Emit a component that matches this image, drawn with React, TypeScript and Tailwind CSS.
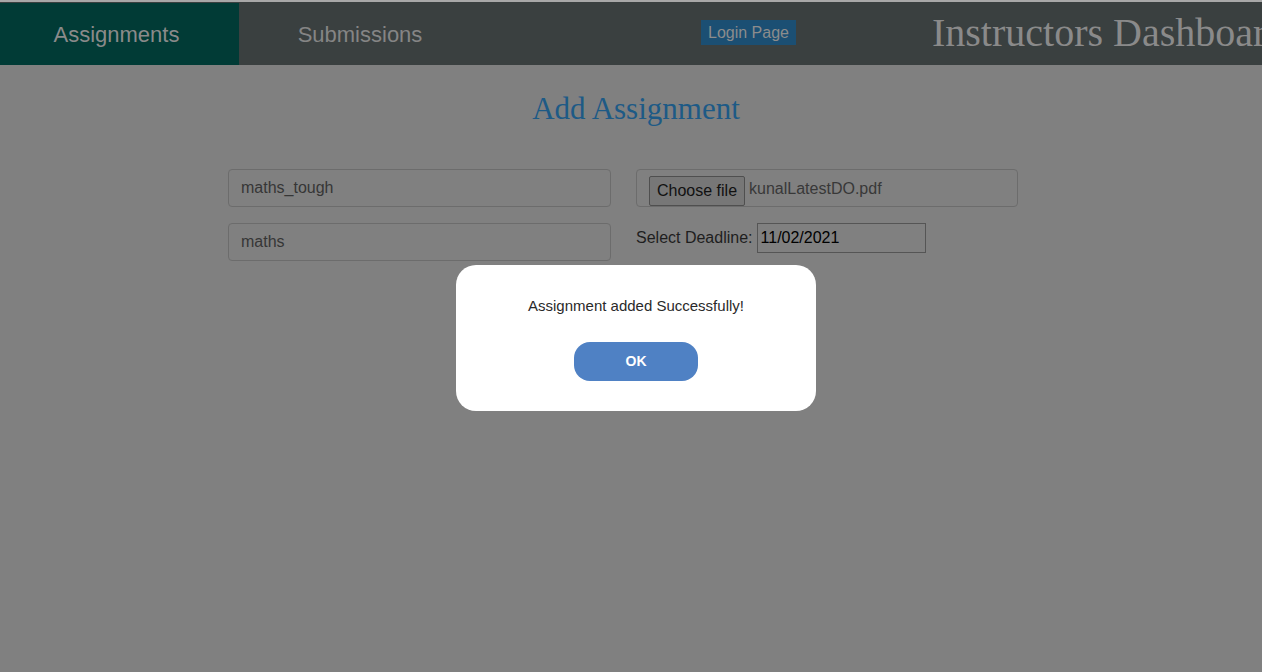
export default function App() {
  return (
    <div className="relative min-h-screen w-full overflow-hidden bg-[#808080] font-['Liberation_Sans',Arial,sans-serif]">
      {/* top strip */}
      <div className="h-[2px] bg-[#a8a8a8]" />
      <div className="h-[1px] bg-[#3a4040]" />

      {/* Nav */}
      <nav className="flex h-[62px] items-center overflow-hidden whitespace-nowrap bg-[#3a4040]">
        <div className="flex h-full w-[239px] shrink-0 items-center justify-center bg-[#013b36] pr-[6px] text-[22px] text-[#8a8a8a]">
          Assignments
        </div>
        <div className="flex h-full w-[242px] shrink-0 items-center justify-center text-[22px] text-[#858585]">
          Submissions
        </div>
        <button className="mb-[4px] ml-[220px] h-[25px] shrink-0 bg-[#1b4f73] px-[7px] text-[16px] leading-[25px] text-[#8c8c8c]">
          Login Page
        </button>
        <div className="mb-[2px] ml-[136px] shrink-0 font-['Liberation_Serif','Times_New_Roman',serif] text-[40px] text-[#8a8a8a]">
          Instructors Dashboard
        </div>
      </nav>

      {/* Form */}
      <h1 className="mt-[25px] pl-[10px] text-center font-['Liberation_Serif','Times_New_Roman',serif] text-[31px] leading-[38px] text-[#1d5a86]">
        Add Assignment
      </h1>

      <div className="ml-[228px] mt-[41px] flex gap-[25px]">
        <div className="flex w-[383px] flex-col gap-[16px]">
          <div className="flex h-[38px] items-center rounded-[4px] border border-[#6c6c6c] px-[12px] text-[16px] text-[#363636]">
            maths_tough
          </div>
          <div className="flex h-[38px] items-center rounded-[4px] border border-[#6c6c6c] px-[12px] text-[16px] text-[#363636]">
            maths
          </div>
        </div>
        <div className="flex w-[382px] flex-col gap-[16px]">
          <div className="flex h-[38px] items-center rounded-[4px] border border-[#6c6c6c] pl-[12px] text-[16px]">
            <span className="mt-[6px] flex h-[30px] items-center rounded-[2px] border border-[#4f4f4f] bg-[#777777] px-[7px] pb-[1px] text-[#111111]">
              Choose file
            </span>
            <span className="ml-[4px] mt-[2px] text-[#383838]">kunalLatestDO.pdf</span>
          </div>
          <div className="flex items-center text-[16px] text-[#1e1e1e]">
            <span className="mb-[1px]">Select Deadline:</span>
            <span className="ml-[4px] flex h-[30px] w-[169px] items-center border border-[#555555] px-[3px] pb-[1px] text-[#000000]">
              11/02/2021
            </span>
          </div>
        </div>
      </div>

      {/* Alert modal */}
      <div className="absolute left-[456px] top-[265px] flex h-[146px] w-[360px] flex-col items-center rounded-[20px] bg-white">
        <p className="mt-[32px] text-[15px] leading-[18px] text-[#2a2a2a]">Assignment added Successfully!</p>
        <button className="mt-[27px] h-[39px] w-[124px] rounded-[16px] bg-[#4f81c4] text-[14px] font-bold text-white">
          OK
        </button>
      </div>
    </div>
  )
}
